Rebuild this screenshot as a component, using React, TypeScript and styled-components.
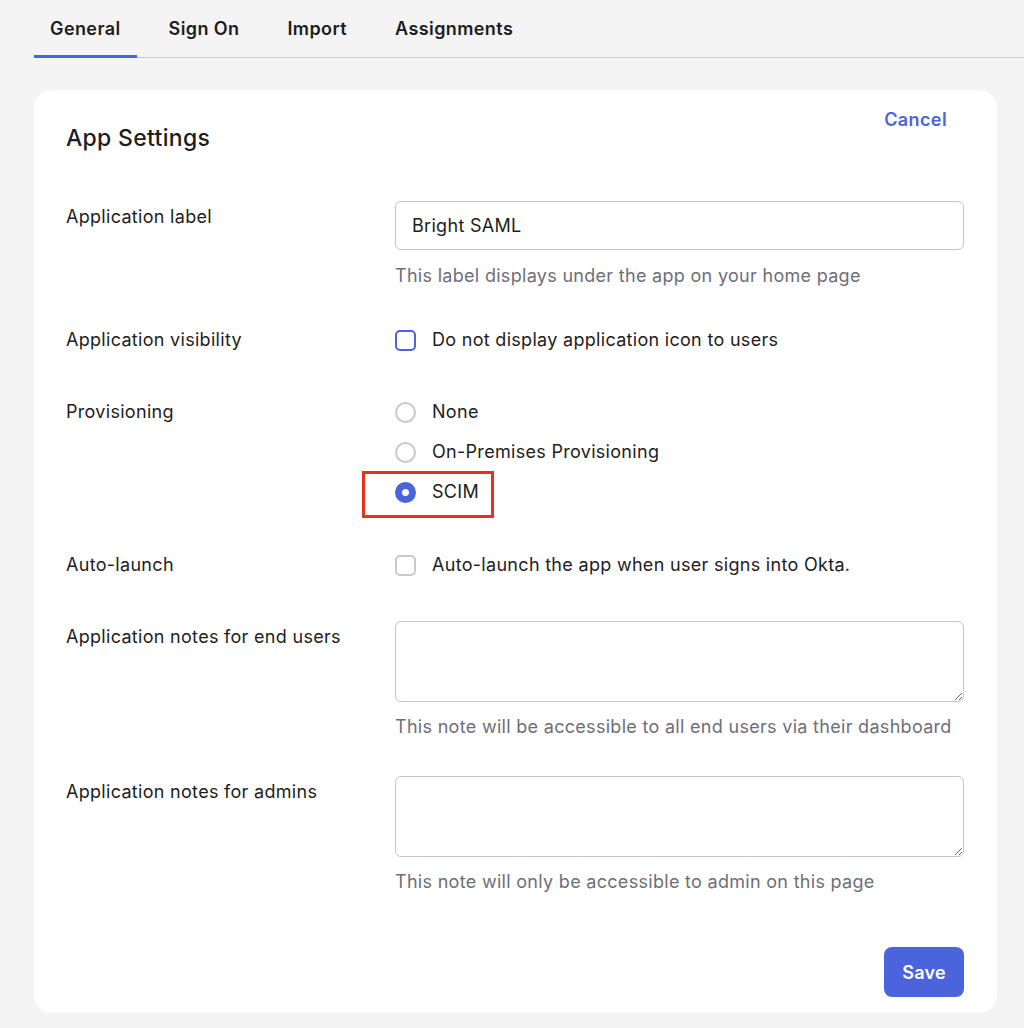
import React from "react";
import styled, { createGlobalStyle } from "styled-components";

const GlobalStyle = createGlobalStyle`
  html, body {
    margin: 0;
    padding: 0;
    background: #f4f4f4;
    font-family: Inter, "Noto Sans", "Liberation Sans", sans-serif;
    color: #1d1d21;
  }
  * {
    box-sizing: border-box;
  }
`;

const Page = styled.div`
  min-height: 1028px;
  padding-left: 34px;
`;

const TabList = styled.div`
  display: flex;
  gap: 16px;
  border-bottom: 1px solid #c9c9cc;
`;

const Tab = styled.div<{ $active?: boolean }>`
  padding: 17px 16px 14px;
  margin-bottom: -1px;
  font-size: 18px;
  line-height: 24px;
  font-weight: 600;
  letter-spacing: 0.4px;
  color: #1d1d21;
  border-bottom: 3px solid ${(p) => (p.$active ? "#4b63dc" : "transparent")};
`;

const Card = styled.div`
  margin: 32px 27px 0 0;
  background: #ffffff;
  border-radius: 18px;
  padding: 20px 33px 16px 32px;
`;

const Header = styled.div`
  display: flex;
  justify-content: space-between;
  align-items: flex-start;
`;

const Title = styled.h2`
  margin: 14px 0 0;
  font-size: 23px;
  line-height: 28px;
  font-weight: 500;
  letter-spacing: 0.3px;
`;

const CancelButton = styled.button`
  background: none;
  border: none;
  padding: 0 16px;
  margin-right: 1px;
  font-family: inherit;
  font-size: 18px;
  line-height: 20px;
  font-weight: 600;
  letter-spacing: 0.4px;
  color: #4b63dc;
  cursor: pointer;
`;

const Row = styled.div<{ $top: number }>`
  display: grid;
  grid-template-columns: 329px 1fr;
  margin-top: ${(p) => p.$top}px;
  font-size: 18px;
  letter-spacing: 0.3px;
`;

const Label = styled.div<{ $offset?: number }>`
  line-height: 24px;
  padding-top: ${(p) => p.$offset ?? 0}px;
`;

const Field = styled.div`
  display: flex;
  flex-direction: column;
`;

const TextInput = styled.input`
  height: 49px;
  width: 100%;
  border: 1px solid #c3c3c8;
  border-radius: 6px;
  padding: 0 16px;
  font-family: inherit;
  font-size: 18px;
  letter-spacing: 0.3px;
  color: #1d1d21;
  outline: none;
`;

const TextArea = styled.textarea`
  height: 81px;
  width: 100%;
  border: 1px solid #c3c3c8;
  border-radius: 6px;
  padding: 12px 16px;
  font-family: inherit;
  font-size: 18px;
  resize: vertical;
  outline: none;
  display: block;
`;

const Hint = styled.div<{ $gap?: number }>`
  margin-top: ${(p) => p.$gap ?? 14}px;
  line-height: 24px;
  color: #6e6e78;
`;

const Options = styled.div`
  display: flex;
  flex-direction: column;
  gap: 16px;
`;

const Option = styled.label`
  position: relative;
  display: flex;
  align-items: center;
  gap: 16px;
  line-height: 24px;
  width: max-content;
`;

const Box = styled.span<{ $focus?: boolean }>`
  width: 21px;
  height: 21px;
  border-radius: 5px;
  border: 2px solid ${(p) => (p.$focus ? "#4b63dc" : "#c9c9cc")};
  background: #fff;
  flex-shrink: 0;
`;

const Radio = styled.span<{ $checked?: boolean }>`
  width: 21px;
  height: 21px;
  border-radius: 50%;
  flex-shrink: 0;
  border: ${(p) => (p.$checked ? "7px solid #4b63dc" : "2px solid #c9c9cc")};
  background: #fff;
`;

const Highlight = styled.span`
  position: absolute;
  left: -33px;
  top: -9px;
  width: 132px;
  height: 47px;
  border: 3px solid #e5311d;
  pointer-events: none;
`;

const Footer = styled.div`
  display: flex;
  justify-content: flex-end;
  margin-top: 53px;
`;

const SaveButton = styled.button`
  height: 50px;
  padding: 0 18px;
  border: none;
  border-radius: 8px;
  background: #4b63dc;
  color: #ffffff;
  font-family: inherit;
  font-size: 18px;
  font-weight: 600;
  letter-spacing: 0.3px;
  cursor: pointer;
`;

const tabs = ["General", "Sign On", "Import", "Assignments"];

export default function App() {
  return (
    <Page>
      <GlobalStyle />
      <TabList>
        {tabs.map((t, i) => (
          <Tab key={t} $active={i === 0}>
            {t}
          </Tab>
        ))}
      </TabList>

      <Card>
        <Header>
          <Title>App Settings</Title>
          <CancelButton>Cancel</CancelButton>
        </Header>

        <Row $top={49}>
          <Label $offset={4}>Application label</Label>
          <Field>
            <TextInput defaultValue="Bright SAML" />
            <Hint>This label displays under the app on your home page</Hint>
          </Field>
        </Row>

        <Row $top={40}>
          <Label>Application visibility</Label>
          <Options>
            <Option>
              <Box $focus />
              Do not display application icon to users
            </Option>
          </Options>
        </Row>

        <Row $top={48}>
          <Label>Provisioning</Label>
          <Options>
            <Option>
              <Radio />
              None
            </Option>
            <Option>
              <Radio />
              On-Premises Provisioning
            </Option>
            <Option>
              <Radio $checked />
              SCIM
              <Highlight />
            </Option>
          </Options>
        </Row>

        <Row $top={49}>
          <Label>Auto-launch</Label>
          <Options>
            <Option>
              <Box />
              Auto-launch the app when user signs into Okta.
            </Option>
          </Options>
        </Row>

        <Row $top={44}>
          <Label $offset={4}>Application notes for end users</Label>
          <Field>
            <TextArea />
            <Hint $gap={13}>This note will be accessible to all end users via their dashboard</Hint>
          </Field>
        </Row>

        <Row $top={37}>
          <Label $offset={4}>Application notes for admins</Label>
          <Field>
            <TextArea />
            <Hint $gap={13}>This note will only be accessible to admin on this page</Hint>
          </Field>
        </Row>

        <Footer>
          <SaveButton>Save</SaveButton>
        </Footer>
      </Card>
    </Page>
  );
}
